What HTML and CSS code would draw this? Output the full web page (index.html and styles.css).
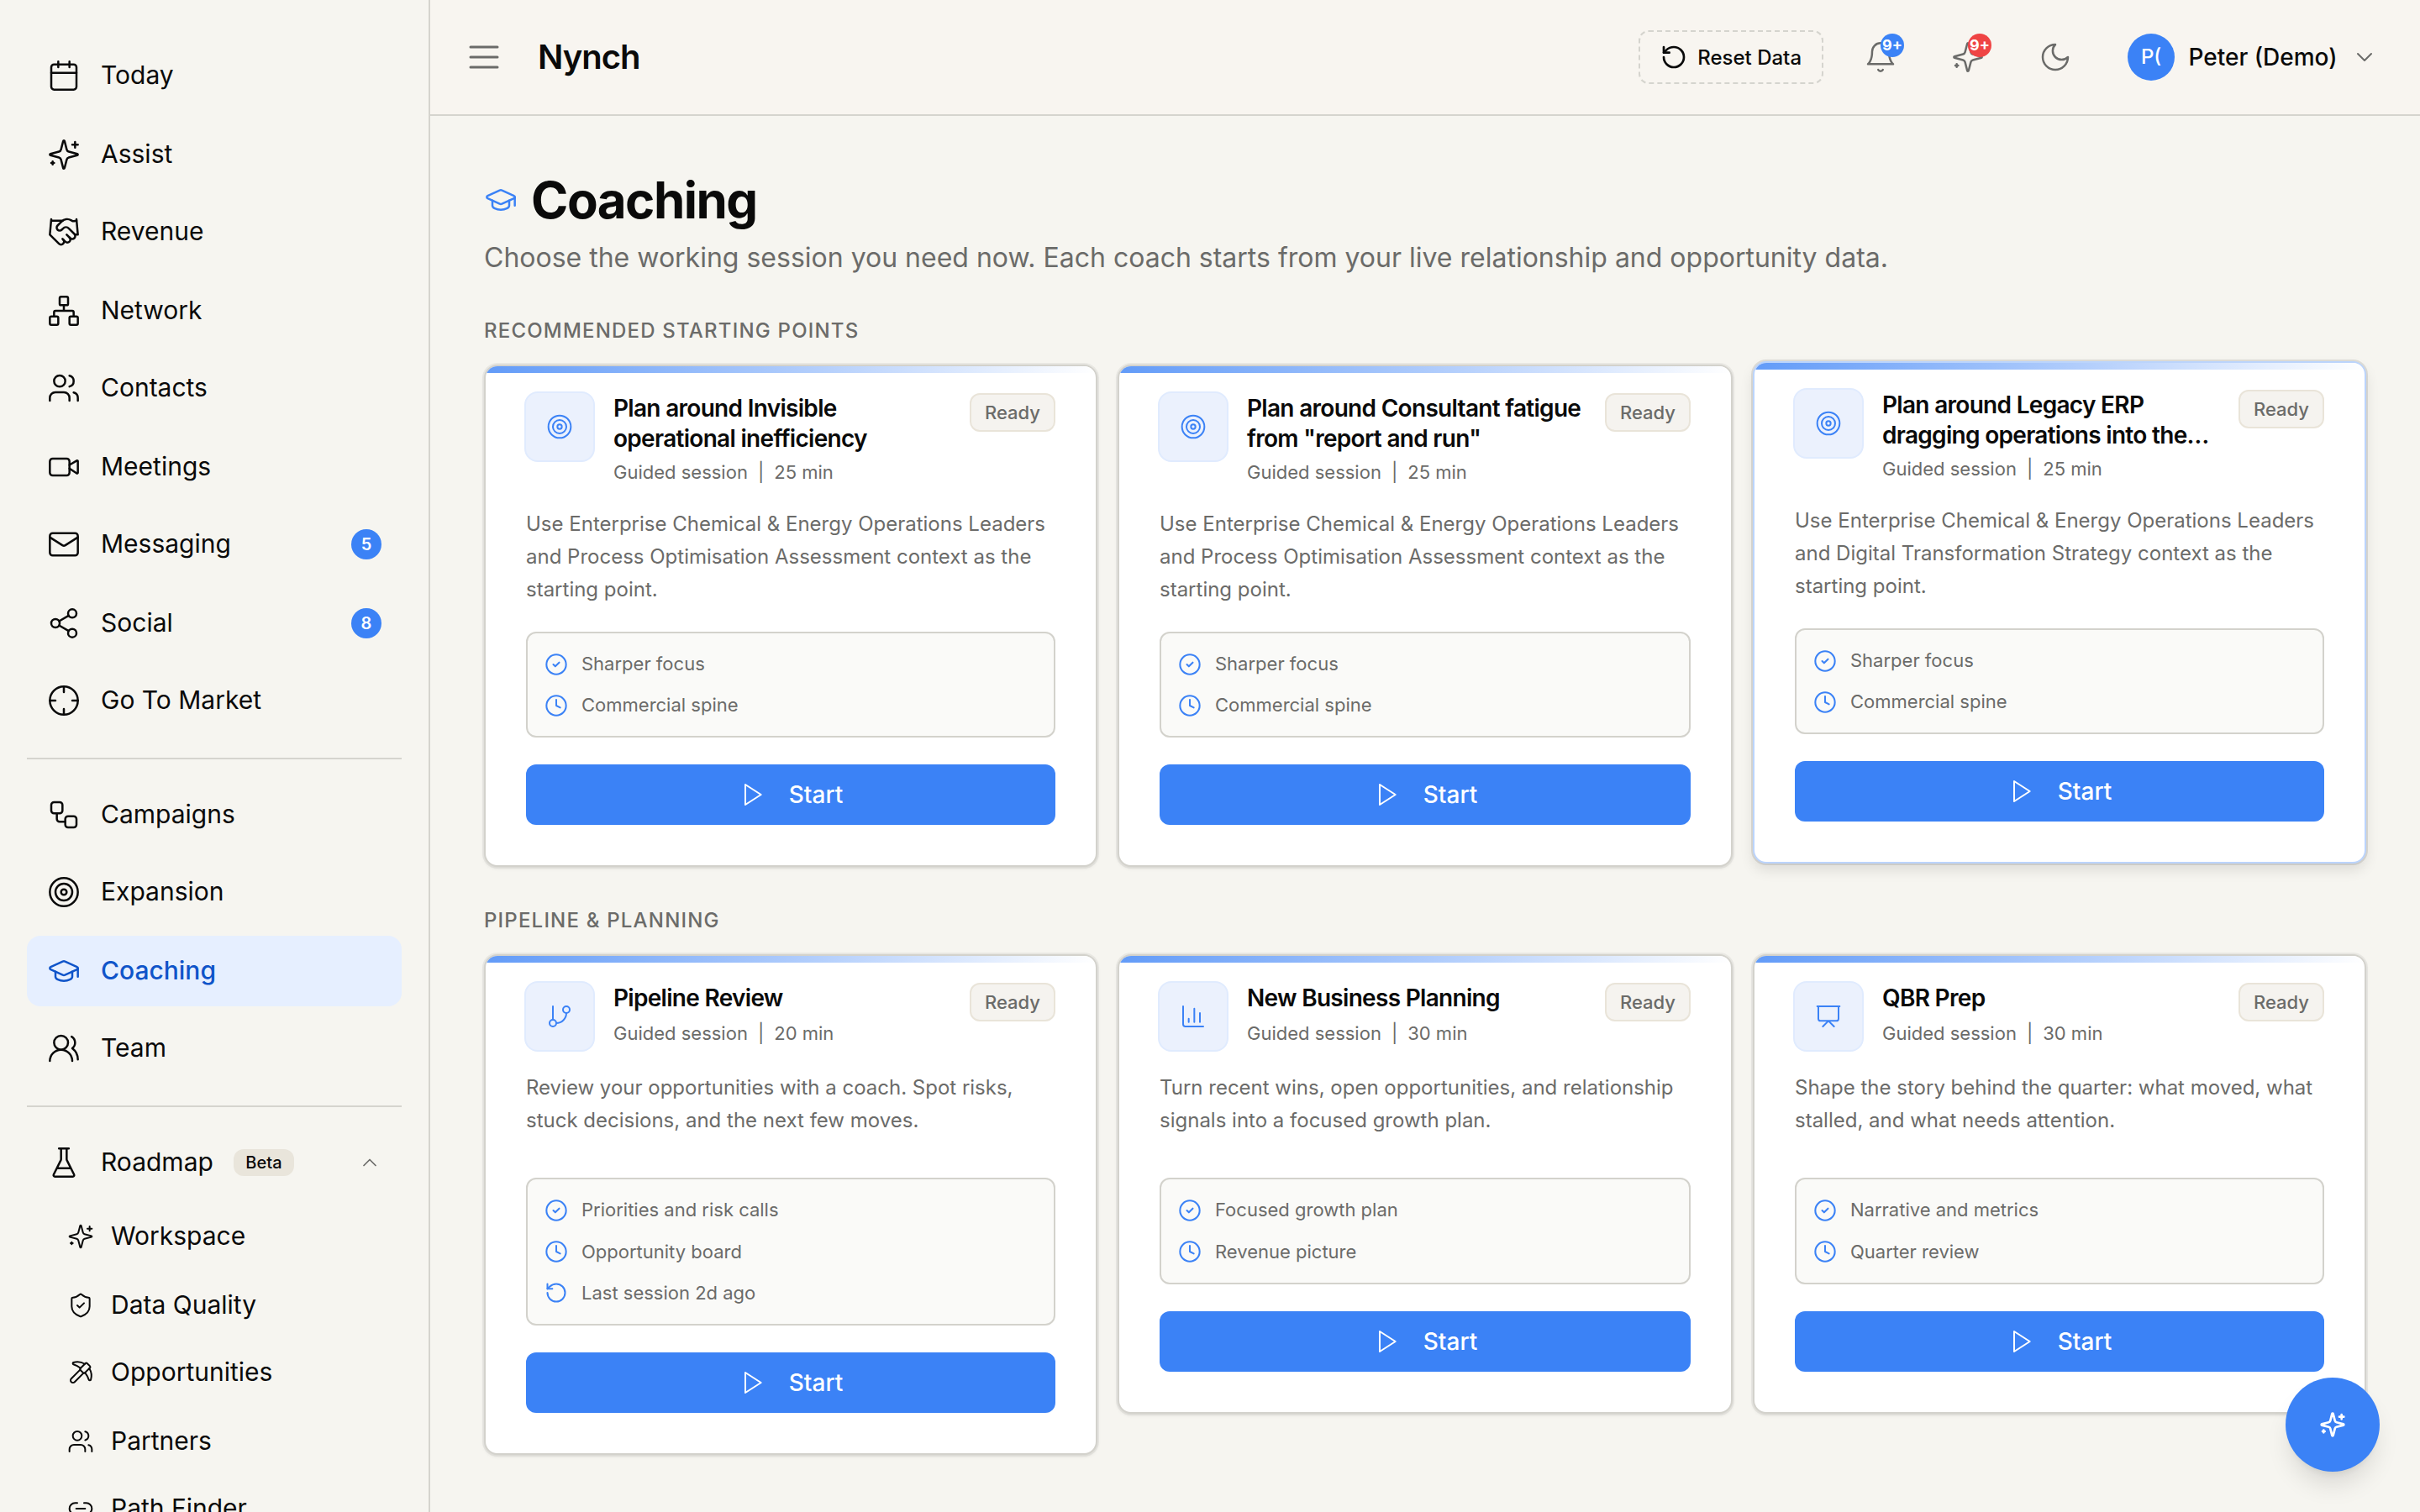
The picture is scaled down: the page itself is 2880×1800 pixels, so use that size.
FILE: index.html
```html
<!DOCTYPE html>
<html lang="en">
<head>
  <meta charset="UTF-8" />
  <meta name="viewport" content="width=device-width, initial-scale=1.0" />
  <title>Nynch - Coaching</title>
  <link rel="stylesheet" href="styles.css">
</head>
<body>
  <!-- Icon sprite -->
  <svg class="sprite" xmlns="http://www.w3.org/2000/svg">
    <symbol id="calendar" viewBox="0 0 24 24"><path d="M8 2v4M16 2v4M3 10h18" /><rect width="18" height="18" x="3" y="4" rx="2" /></symbol>
    <symbol id="sparkles" viewBox="0 0 24 24"><path d="M9.937 15.5A2 2 0 0 0 8.5 14.063l-6.135-1.582a.5.5 0 0 1 0-.962L8.5 9.936A2 2 0 0 0 9.937 8.5l1.582-6.135a.5.5 0 0 1 .963 0L14.063 8.5A2 2 0 0 0 15.5 9.937l6.135 1.581a.5.5 0 0 1 0 .964L15.5 14.063a2 2 0 0 0-1.437 1.437l-1.582 6.135a.5.5 0 0 1-.963 0z" /><path d="M20 3v4M22 5h-4M4 17v2M5 18H3" /></symbol>
    <symbol id="handshake" viewBox="0 0 24 24"><path d="m11 17 2 2a1 1 0 1 0 3-3" /><path d="m14 14 2.5 2.5a1 1 0 1 0 3-3l-3.88-3.88a3 3 0 0 0-4.24 0l-.88.88a1 1 0 1 1-3-3l2.81-2.81a5.79 5.79 0 0 1 7.06-.87l.47.28a2 2 0 0 0 1.42.25L21 4" /><path d="m21 3 1 11h-2M3 3 2 14l6.5 6.5a1 1 0 1 0 3-3M3 4h8" /></symbol>
    <symbol id="network" viewBox="0 0 24 24"><rect x="16" y="16" width="6" height="6" rx="1" /><rect x="2" y="16" width="6" height="6" rx="1" /><rect x="9" y="2" width="6" height="6" rx="1" /><path d="M5 16v-3a1 1 0 0 1 1-1h12a1 1 0 0 1 1 1v3M12 12V8" /></symbol>
    <symbol id="users" viewBox="0 0 24 24"><path d="M16 21v-2a4 4 0 0 0-4-4H6a4 4 0 0 0-4 4v2" /><circle cx="9" cy="7" r="4" /><path d="M22 21v-2a4 4 0 0 0-3-3.87M16 3.13a4 4 0 0 1 0 7.75" /></symbol>
    <symbol id="video" viewBox="0 0 24 24"><path d="m16 13 5.223 3.482a.5.5 0 0 0 .777-.416V7.87a.5.5 0 0 0-.752-.432L16 10.5" /><rect x="2" y="6" width="14" height="12" rx="2" /></symbol>
    <symbol id="mail" viewBox="0 0 24 24"><rect width="20" height="16" x="2" y="4" rx="2" /><path d="m22 7-8.97 5.7a1.94 1.94 0 0 1-2.06 0L2 7" /></symbol>
    <symbol id="share" viewBox="0 0 24 24"><circle cx="18" cy="5" r="3" /><circle cx="6" cy="12" r="3" /><circle cx="18" cy="19" r="3" /><path d="m8.59 13.51 6.83 3.98M15.41 6.51l-6.82 3.98" /></symbol>
    <symbol id="crosshair" viewBox="0 0 24 24"><circle cx="12" cy="12" r="10" /><path d="M22 12h-4M6 12H2M12 6V2M12 22v-4" /></symbol>
    <symbol id="workflow" viewBox="0 0 24 24"><rect width="8" height="8" x="3" y="3" rx="2" /><path d="M7 11v4a2 2 0 0 0 2 2h4" /><rect width="8" height="8" x="13" y="13" rx="2" /></symbol>
    <symbol id="target" viewBox="0 0 24 24"><circle cx="12" cy="12" r="10" /><circle cx="12" cy="12" r="6" /><circle cx="12" cy="12" r="2" /></symbol>
    <symbol id="cap" viewBox="0 0 24 24"><path d="M21.42 10.922a1 1 0 0 0-.019-1.838L12.83 5.18a2 2 0 0 0-1.66 0L2.6 9.08a1 1 0 0 0 0 1.832l8.57 3.908a2 2 0 0 0 1.66 0z" /><path d="M22 10v6M6 12.5V16a6 3 0 0 0 12 0v-3.5" /></symbol>
    <symbol id="users-round" viewBox="0 0 24 24"><path d="M18 21a8 8 0 0 0-16 0" /><circle cx="10" cy="8" r="5" /><path d="M22 20c0-3.37-2-6.5-4-8a5 5 0 0 0-.45-8.3" /></symbol>
    <symbol id="flask" viewBox="0 0 24 24"><path d="M10 2v7.527a2 2 0 0 1-.211.896L4.72 20.55a1 1 0 0 0 .9 1.45h12.76a1 1 0 0 0 .9-1.45l-5.069-10.127A2 2 0 0 1 14 9.527V2M8.5 2h7M7 16h10" /></symbol>
    <symbol id="chevron-up" viewBox="0 0 24 24"><path d="m18 15-6-6-6 6" /></symbol>
    <symbol id="chevron-down" viewBox="0 0 24 24"><path d="m6 9 6 6 6-6" /></symbol>
    <symbol id="shield" viewBox="0 0 24 24"><path d="M20 13c0 5-3.5 7.5-7.66 8.95a1 1 0 0 1-.67-.01C7.5 20.5 4 18 4 13V6a1 1 0 0 1 1-1c2 0 4.5-1.2 6.24-2.72a1.17 1.17 0 0 1 1.52 0C14.51 3.81 17 5 19 5a1 1 0 0 1 1 1z" /><path d="m9 12 2 2 4-4" /></symbol>
    <symbol id="pickaxe" viewBox="0 0 24 24"><path d="M14.531 12.469 6.619 20.38a1 1 0 1 1-3-3l7.912-7.912" /><path d="M15.686 4.314A12.5 12.5 0 0 0 5.461 2.958 1 1 0 0 0 5.58 4.71a22 22 0 0 1 6.318 3.393" /><path d="M17.7 3.7a1 1 0 0 0-1.4 0l-4.6 4.6a1 1 0 0 0 0 1.4l2.6 2.6a1 1 0 0 0 1.4 0l4.6-4.6a1 1 0 0 0 0-1.4z" /><path d="M19.686 8.314a12.501 12.501 0 0 1 1.356 10.225 1 1 0 0 1-1.751-.119 22 22 0 0 0-3.393-6.319" /></symbol>
    <symbol id="link" viewBox="0 0 24 24"><path d="M9 17H7A5 5 0 0 1 7 7h2M15 7h2a5 5 0 1 1 0 10h-2M8 12h8" /></symbol>
    <symbol id="menu" viewBox="0 0 24 24"><path d="M4 6h16M4 12h16M4 18h16" /></symbol>
    <symbol id="reset" viewBox="0 0 24 24"><path d="M3 12a9 9 0 1 0 9-9 9.75 9.75 0 0 0-6.74 2.74L3 8" /><path d="M3 3v5h5" /></symbol>
    <symbol id="bell" viewBox="0 0 24 24"><path d="M6 8a6 6 0 0 1 12 0c0 7 3 9 3 9H3s3-2 3-9M10.3 21a1.94 1.94 0 0 0 3.4 0" /></symbol>
    <symbol id="moon" viewBox="0 0 24 24"><path d="M12 3a6 6 0 0 0 9 9 9 9 0 1 1-9-9Z" /></symbol>
    <symbol id="branch" viewBox="0 0 24 24"><path d="M6 3v12" /><circle cx="18" cy="6" r="3" /><circle cx="6" cy="18" r="3" /><path d="M18 9a9 9 0 0 1-9 9" /></symbol>
    <symbol id="chart" viewBox="0 0 24 24"><path d="M3 3v16a2 2 0 0 0 2 2h16M18 17V9M13 17V5M8 17v-3" /></symbol>
    <symbol id="presentation" viewBox="0 0 24 24"><path d="M2 3h20M21 3v11a2 2 0 0 1-2 2H5a2 2 0 0 1-2-2V3M7 21l5-5 5 5" /></symbol>
    <symbol id="check" viewBox="0 0 24 24"><circle cx="12" cy="12" r="10" /><path d="m9 12 2 2 4-4" /></symbol>
    <symbol id="clock" viewBox="0 0 24 24"><circle cx="12" cy="12" r="10" /><path d="M12 6v6l4 2" /></symbol>
    <symbol id="play" viewBox="0 0 24 24"><path d="m6 3 14 9-14 9V3z" /></symbol>
  </svg>

  <div class="app">
    <aside class="sidebar">
      <nav class="nav-group">
        <a class="nav-item"><svg class="icon"><use href="#calendar" /></svg>Today</a>
        <a class="nav-item"><svg class="icon"><use href="#sparkles" /></svg>Assist</a>
        <a class="nav-item"><svg class="icon"><use href="#handshake" /></svg>Revenue</a>
        <a class="nav-item"><svg class="icon"><use href="#network" /></svg>Network</a>
        <a class="nav-item"><svg class="icon"><use href="#users" /></svg>Contacts</a>
        <a class="nav-item"><svg class="icon"><use href="#video" /></svg>Meetings</a>
        <a class="nav-item"><svg class="icon"><use href="#mail" /></svg>Messaging<span class="count">5</span></a>
        <a class="nav-item"><svg class="icon"><use href="#share" /></svg>Social<span class="count">8</span></a>
        <a class="nav-item"><svg class="icon"><use href="#crosshair" /></svg>Go To Market</a>
      </nav>
      <nav class="nav-group nav-group-alt">
        <a class="nav-item"><svg class="icon"><use href="#workflow" /></svg>Campaigns</a>
        <a class="nav-item"><svg class="icon"><use href="#target" /></svg>Expansion</a>
        <a class="nav-item active"><svg class="icon"><use href="#cap" /></svg>Coaching</a>
        <a class="nav-item"><svg class="icon"><use href="#users-round" /></svg>Team</a>
      </nav>
      <nav class="nav-group">
        <a class="nav-item"><svg class="icon"><use href="#flask" /></svg>Roadmap<span class="beta">Beta</span><svg class="icon nav-chevron"><use href="#chevron-up" /></svg></a>
        <div class="sub-nav">
          <a class="nav-item"><svg class="icon"><use href="#sparkles" /></svg>Workspace</a>
          <a class="nav-item"><svg class="icon"><use href="#shield" /></svg>Data Quality</a>
          <a class="nav-item"><svg class="icon"><use href="#pickaxe" /></svg>Opportunities</a>
          <a class="nav-item"><svg class="icon"><use href="#users" /></svg>Partners</a>
          <a class="nav-item"><svg class="icon"><use href="#link" /></svg>Path Finder</a>
        </div>
      </nav>
    </aside>

    <div class="page">
      <header class="topbar">
        <svg class="icon menu-icon"><use href="#menu" /></svg>
        <div class="brand">Nynch</div>
        <div class="topbar-actions">
          <button class="reset-btn"><svg class="icon"><use href="#reset" /></svg>Reset Data</button>
          <button class="icon-btn"><svg class="icon"><use href="#bell" /></svg><span class="notif">9+</span></button>
          <button class="icon-btn"><svg class="icon"><use href="#sparkles" /></svg><span class="notif red">9+</span></button>
          <button class="icon-btn"><svg class="icon"><use href="#moon" /></svg></button>
          <div class="user">
            <span class="avatar">P(</span>
            <span class="user-name">Peter (Demo)</span>
            <svg class="icon"><use href="#chevron-down" /></svg>
          </div>
        </div>
      </header>

      <main class="content">
        <h1><svg class="icon"><use href="#cap" /></svg>Coaching</h1>
        <p class="subtitle">Choose the working session you need now. Each coach starts from your live relationship and opportunity data.</p>

        <h2>Recommended starting points</h2>
        <div class="cards">
          <article class="card">
            <div class="card-head">
              <div class="tile"><svg class="icon"><use href="#target" /></svg></div>
              <div class="card-title">
                <h3>Plan around Invisible operational inefficiency</h3>
                <div class="meta"><span>Guided session</span><span>|</span><span>25 min</span></div>
              </div>
              <span class="status">Ready</span>
            </div>
            <p class="desc">Use Enterprise Chemical &amp; Energy Operations Leaders and Process Optimisation Assessment context as the starting point.</p>
            <ul class="facts">
              <li><svg class="icon"><use href="#check" /></svg>Sharper focus</li>
              <li><svg class="icon"><use href="#clock" /></svg>Commercial spine</li>
            </ul>
            <button class="start"><svg class="icon"><use href="#play" /></svg>Start</button>
          </article>

          <article class="card">
            <div class="card-head">
              <div class="tile"><svg class="icon"><use href="#target" /></svg></div>
              <div class="card-title">
                <h3>Plan around Consultant fatigue from "report and run"</h3>
                <div class="meta"><span>Guided session</span><span>|</span><span>25 min</span></div>
              </div>
              <span class="status">Ready</span>
            </div>
            <p class="desc">Use Enterprise Chemical &amp; Energy Operations Leaders and Process Optimisation Assessment context as the starting point.</p>
            <ul class="facts">
              <li><svg class="icon"><use href="#check" /></svg>Sharper focus</li>
              <li><svg class="icon"><use href="#clock" /></svg>Commercial spine</li>
            </ul>
            <button class="start"><svg class="icon"><use href="#play" /></svg>Start</button>
          </article>

          <article class="card hovered">
            <div class="card-head">
              <div class="tile"><svg class="icon"><use href="#target" /></svg></div>
              <div class="card-title">
                <h3>Plan around Legacy ERP dragging operations into the…</h3>
                <div class="meta"><span>Guided session</span><span>|</span><span>25 min</span></div>
              </div>
              <span class="status">Ready</span>
            </div>
            <p class="desc">Use Enterprise Chemical &amp; Energy Operations Leaders and Digital Transformation Strategy context as the starting point.</p>
            <ul class="facts">
              <li><svg class="icon"><use href="#check" /></svg>Sharper focus</li>
              <li><svg class="icon"><use href="#clock" /></svg>Commercial spine</li>
            </ul>
            <button class="start"><svg class="icon"><use href="#play" /></svg>Start</button>
          </article>
        </div>

        <h2>Pipeline &amp; planning</h2>
        <div class="cards">
          <article class="card">
            <div class="card-head">
              <div class="tile"><svg class="icon"><use href="#branch" /></svg></div>
              <div class="card-title">
                <h3>Pipeline Review</h3>
                <div class="meta"><span>Guided session</span><span>|</span><span>20 min</span></div>
              </div>
              <span class="status">Ready</span>
            </div>
            <p class="desc">Review your opportunities with a coach. Spot risks, stuck decisions, and the next few moves.</p>
            <ul class="facts">
              <li><svg class="icon"><use href="#check" /></svg>Priorities and risk calls</li>
              <li><svg class="icon"><use href="#clock" /></svg>Opportunity board</li>
              <li><svg class="icon"><use href="#reset" /></svg>Last session 2d ago</li>
            </ul>
            <button class="start"><svg class="icon"><use href="#play" /></svg>Start</button>
          </article>

          <article class="card">
            <div class="card-head">
              <div class="tile"><svg class="icon"><use href="#chart" /></svg></div>
              <div class="card-title">
                <h3>New Business Planning</h3>
                <div class="meta"><span>Guided session</span><span>|</span><span>30 min</span></div>
              </div>
              <span class="status">Ready</span>
            </div>
            <p class="desc">Turn recent wins, open opportunities, and relationship signals into a focused growth plan.</p>
            <ul class="facts">
              <li><svg class="icon"><use href="#check" /></svg>Focused growth plan</li>
              <li><svg class="icon"><use href="#clock" /></svg>Revenue picture</li>
            </ul>
            <button class="start"><svg class="icon"><use href="#play" /></svg>Start</button>
          </article>

          <article class="card">
            <div class="card-head">
              <div class="tile"><svg class="icon"><use href="#presentation" /></svg></div>
              <div class="card-title">
                <h3>QBR Prep</h3>
                <div class="meta"><span>Guided session</span><span>|</span><span>30 min</span></div>
              </div>
              <span class="status">Ready</span>
            </div>
            <p class="desc">Shape the story behind the quarter: what moved, what stalled, and what needs attention.</p>
            <ul class="facts">
              <li><svg class="icon"><use href="#check" /></svg>Narrative and metrics</li>
              <li><svg class="icon"><use href="#clock" /></svg>Quarter review</li>
            </ul>
            <button class="start"><svg class="icon"><use href="#play" /></svg>Start</button>
          </article>
        </div>
      </main>
    </div>
  </div>

  <button class="fab"><svg class="icon"><use href="#sparkles" /></svg></button>
</body>
</html>
```
FILE: styles.css
```css
* {
  margin: 0;
  padding: 0;
  box-sizing: border-box;
}
body {
  font-family: "Inter", sans-serif;
  background: #f6f5f0;
  color: #0a0a0a;
  overflow: hidden;
}
button {
  font-family: inherit;
  color: inherit;
  background: none;
  border: none;
  cursor: pointer;
}
.sprite {
  display: none;
}
.icon {
  width: 40px;
  height: 40px;
  flex-shrink: 0;
  fill: none;
  stroke: currentColor;
  stroke-width: 1.5;
  stroke-linecap: round;
  stroke-linejoin: round;
}
.app {
  display: flex;
  height: 100vh;
}

/* Sidebar */
.sidebar {
  width: 512px;
  flex-shrink: 0;
  padding: 48px 32px 0;
  border-right: 2px solid #d5d4ce;
  overflow: hidden;
}
.nav-group + .nav-group {
  margin-top: 26px;
  padding-top: 24px;
  border-top: 2px solid #d5d4ce;
}
.nav-item {
  display: flex;
  align-items: center;
  gap: 24px;
  height: 84px;
  padding: 0 24px 2px;
  border-radius: 16px;
  font-size: 30px;
}
.nav-item .icon,
.nav-item .count,
.nav-item .beta {
  margin-top: 2px;
}
.nav-item + .nav-item {
  margin-top: 8px;
}
.nav-item:nth-child(even) {
  margin-top: 10px;
}
.nav-group-alt .nav-item:nth-child(even) {
  margin-top: 8px;
}
.nav-group-alt .nav-item.active {
  margin-top: 10px;
}
.nav-item.active {
  background: #e6efff;
  color: #0f54c9;
  font-weight: 500;
}
.sub-nav {
  margin-top: 10px;
}
.sub-nav .nav-item {
  height: 72px;
  gap: 20px;
  padding-left: 48px;
}
.sub-nav .icon {
  width: 32px;
  height: 32px;
}
.count {
  display: flex;
  align-items: center;
  justify-content: center;
  width: 36px;
  height: 36px;
  margin-left: auto;
  border-radius: 50%;
  background: #3b82f6;
  color: #fff;
  font-size: 20px;
  font-weight: 600;
}
.beta {
  padding: 0 14.5px;
  border-radius: 12px;
  background: #e9e5db;
  font-size: 20px;
  font-weight: 500;
  line-height: 32px;
}
.nav-chevron {
  width: 28px;
  height: 28px;
  margin-left: auto;
  color: #6b6b69;
}

/* Top bar */
.page {
  flex: 1;
  min-width: 0;
}
.topbar {
  display: flex;
  align-items: center;
  height: 138px;
  padding: 0 50px 0 40px;
  background: #f8f5f0;
  border-bottom: 2px solid #d5d4ce;
}
.menu-icon {
  width: 48px;
  height: 48px;
  color: #6b6b69;
}
.brand {
  margin-left: 40px;
  padding-bottom: 2px;
  font-size: 40px;
  font-weight: 600;
  letter-spacing: -0.025em;
}
.topbar-actions {
  display: flex;
  align-items: center;
  gap: 32px;
  margin-left: auto;
}
.reset-btn {
  display: flex;
  align-items: center;
  gap: 12px;
  height: 64px;
  padding: 0 24px;
  border: 2px dashed #d5d4ce;
  border-radius: 12px;
  font-size: 24px;
  font-weight: 500;
}
.reset-btn .icon {
  width: 32px;
  height: 32px;
  stroke-width: 2;
}
.icon-btn {
  position: relative;
  display: flex;
  align-items: center;
  justify-content: center;
  width: 72px;
  height: 72px;
  color: #6b6b69;
}
.notif {
  position: absolute;
  top: 8px;
  right: 8px;
  width: 28px;
  height: 28px;
  border-radius: 50%;
  background: #3b82f6;
  color: #fff;
  font-size: 18px;
  font-weight: 700;
  line-height: 28px;
  text-align: center;
}
.notif.red {
  background: #ef4444;
}
.user {
  display: flex;
  align-items: center;
  gap: 16.5px;
  margin-left: 18px;
}
.avatar {
  width: 56px;
  height: 56px;
  border-radius: 50%;
  background: #3b82f6;
  color: #fff;
  font-size: 24px;
  font-weight: 500;
  line-height: 56px;
  text-align: center;
}
.user-name {
  font-size: 28px;
  font-weight: 500;
}
.user .icon {
  width: 32px;
  height: 32px;
  color: #6b6b69;
}

/* Content */
.content {
  padding: 64px 64px 0;
}
h1 {
  display: flex;
  align-items: center;
  gap: 16px;
  height: 74px;
  padding-bottom: 2px;
  font-size: 60px;
  font-weight: 700;
  letter-spacing: -0.025em;
}
h1 .icon {
  color: #3b82f6;
}
.subtitle {
  margin-top: 8px;
  font-size: 32px;
  line-height: 46px;
  color: #6b6b69;
}
h2 {
  margin: 46px 0 22px;
  font-size: 24px;
  font-weight: 500;
  line-height: 36px;
  letter-spacing: 0.05em;
  text-transform: uppercase;
  color: #6b6b69;
}
.cards {
  display: grid;
  grid-template-columns: 365fr 366fr 365fr;
  align-items: start;
  gap: 24px;
}
.card {
  position: relative;
  padding: 30px 48px 48px;
  border: 2px solid #d3d2cc;
  border-radius: 16px;
  background: #fff;
  box-shadow: 0 0 0 2px rgba(10, 10, 10, 0.05), 0 2px 4px rgba(10, 10, 10, 0.08);
  overflow: hidden;
}
.card::before {
  content: "";
  position: absolute;
  top: 0;
  left: 0;
  right: 0;
  height: 8px;
  background: linear-gradient(90deg, #629bf8, #b4cffc 55%, #fff);
}
.card.hovered {
  transform: translateY(-4px);
  border-color: #bbd4fc;
  box-shadow: 0 0 0 2px rgba(10, 10, 10, 0.1), 0 8px 16px rgba(10, 10, 10, 0.1);
}
.card-head {
  display: flex;
  align-items: flex-start;
  margin-left: -2px;
}
.tile {
  display: flex;
  align-items: center;
  justify-content: center;
  width: 84px;
  height: 84px;
  flex-shrink: 0;
  border: 2px solid #e0ebfe;
  border-radius: 16px;
  background: #ebf1fd;
  color: #3b82f6;
}
.tile .icon {
  width: 32px;
  height: 32px;
}
.card-title {
  flex: 1;
  margin: 2px 22px 0;
}
h3 {
  min-height: 38px;
  font-size: 28px;
  font-weight: 600;
  line-height: 36px;
  letter-spacing: -0.025em;
}
.meta {
  display: flex;
  gap: 12px;
  padding: 6px 0 2px;
  font-size: 22px;
  line-height: 33px;
  color: #6b6b69;
}
.status {
  margin-top: 2px;
  padding: 0 16px;
  border: 2px solid #e9e4d9;
  border-radius: 12px;
  background: #f5f3ef;
  font-size: 22px;
  font-weight: 500;
  line-height: 42px;
  color: #6b6b69;
}
.desc {
  min-height: 96px;
  margin-top: 23px;
  font-size: 24px;
  line-height: 39px;
  color: #6b6b69;
}
.facts {
  display: flex;
  flex-direction: column;
  gap: 16px;
  margin: 31px 0 32px;
  padding: 20px;
  border: 2px solid #d3d2cc;
  border-radius: 12px;
  background: #fafaf8;
  list-style: none;
  font-size: 22px;
  line-height: 33.2px;
  color: #6b6b69;
}
.facts li {
  display: flex;
  align-items: center;
  gap: 16px;
}
.facts .icon {
  width: 28px;
  height: 28px;
  stroke-width: 1.75;
  color: #3b82f6;
}
.start {
  display: flex;
  align-items: center;
  justify-content: center;
  gap: 28px;
  width: 100%;
  height: 72px;
  border-radius: 12px;
  background: #3b82f6;
  color: #fff;
  font-size: 28px;
  font-weight: 500;
}
.start .icon {
  width: 32px;
  height: 32px;
}

/* Floating assistant button */
.fab {
  position: fixed;
  right: 48px;
  bottom: 48px;
  display: flex;
  align-items: center;
  justify-content: center;
  width: 112px;
  height: 112px;
  border-radius: 50%;
  background: #3b82f6;
  color: #fff;
  box-shadow: 0 20px 30px -6px rgba(10, 10, 10, 0.12), 0 8px 12px -8px rgba(10, 10, 10, 0.12);
}
.fab .icon {
  width: 32px;
  height: 32px;
  stroke-width: 2;
}
```
